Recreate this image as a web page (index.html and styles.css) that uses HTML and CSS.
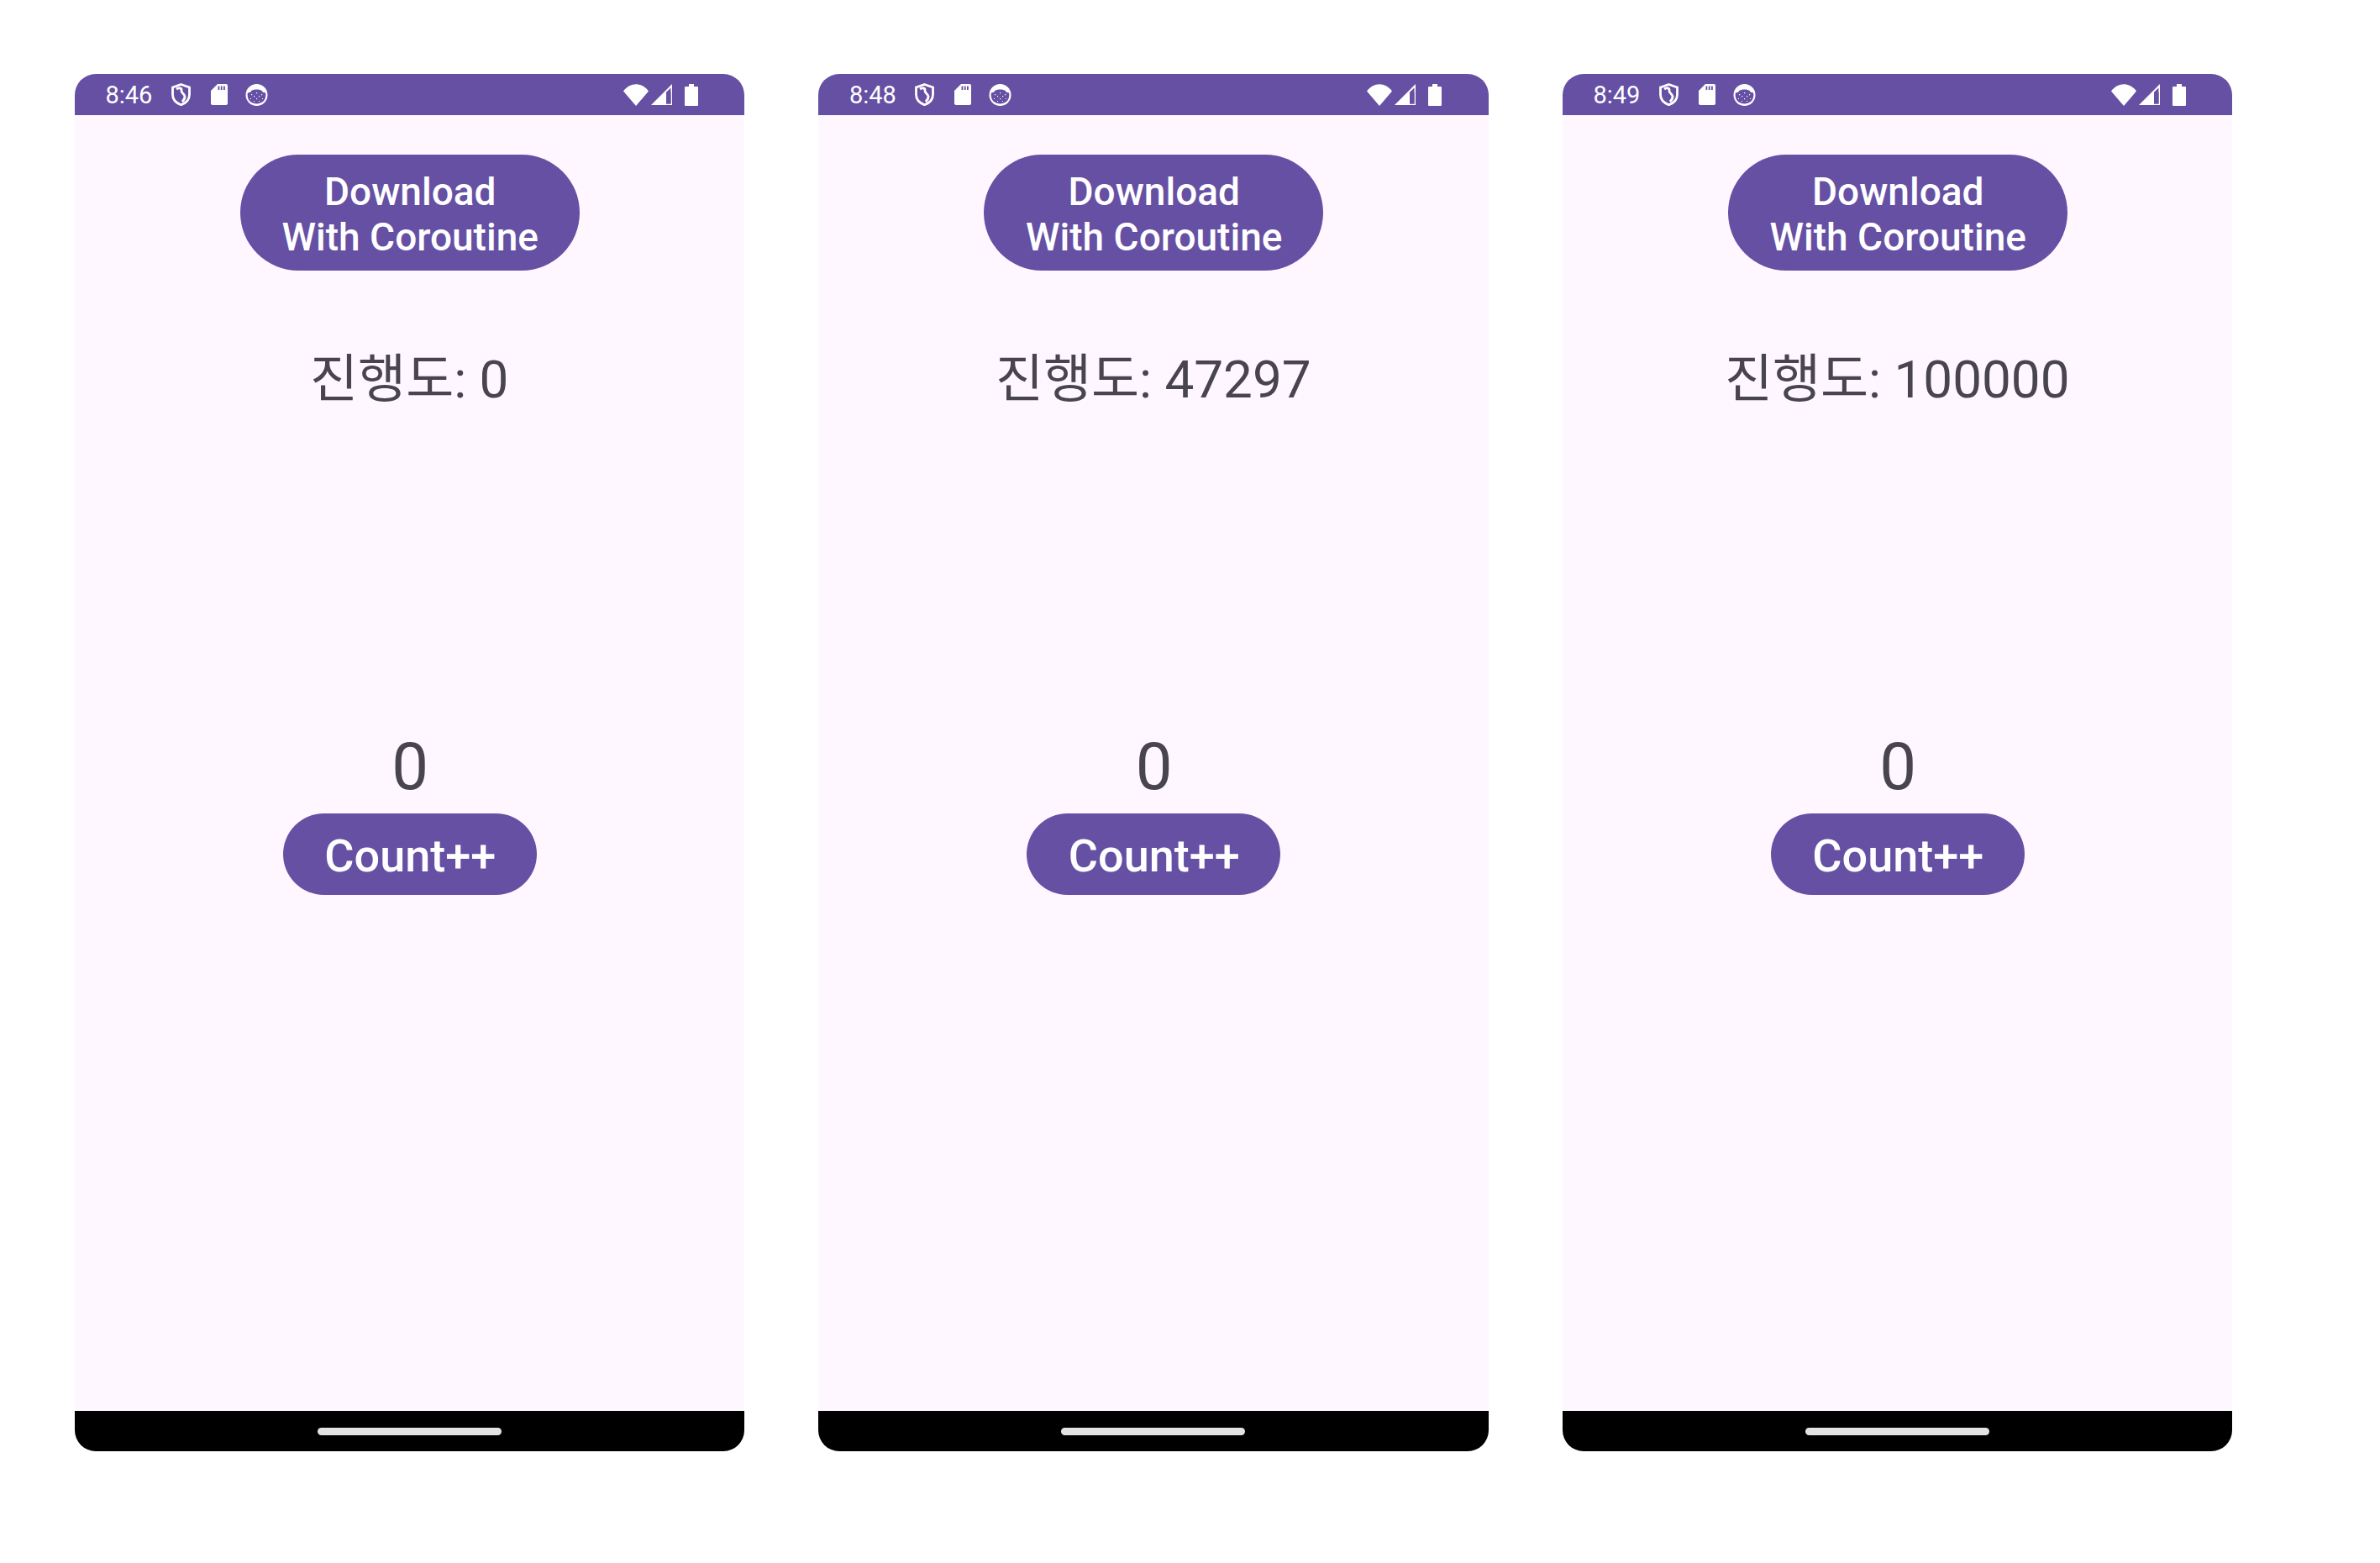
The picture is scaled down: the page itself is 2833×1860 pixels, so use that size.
FILE: index.html
```html
<!DOCTYPE html>
<html lang="ko">
<head>
  <meta charset="UTF-8" />
  <title>Coroutine Download</title>
  <link rel="stylesheet" href="styles.css">
</head>
<body>
  <!-- Status bar icons, shared by all three phones -->
  <svg class="icon-defs" width="0" height="0">
    <symbol id="ic-shield" viewBox="0 0 23 27">
      <path d="M11.5 1.500 21.500 5V13.500C21.500 19 17.500 23.500 11.500 25.800 5.500 23.500 1.500 19 1.500 13.500V5Z" fill="none" stroke="#fff" stroke-width="2.800"/>
      <path d="M6 7C9 5 12.500 5.600 12 9 11.600 11.500 15.500 12.500 16 15.500 16.200 18 15 20 12.800 22" fill="none" stroke="#fff" stroke-width="2.800"/>
    </symbol>
    <symbol id="ic-sd" viewBox="0 0 20 25">
      <path d="M8 0H18A2 2 0 0 1 20 2V23A2 2 0 0 1 18 25H2A2 2 0 0 1 0 23V8Z" fill="#fff"/>
      <path d="M8.500 2.500H10.300V7H8.500ZM11.800 2.500H13.600V7H11.800ZM15 2.500H16.800V7H15Z" fill="#6650a4"/>
    </symbol>
    <symbol id="ic-cat" viewBox="0 0 27 26">
      <circle cx="13.500" cy="13" r="13" fill="#fff"/>
      <path d="M2.800 10.500 6 9.800 7.500 7.800C11 6.200 16 6.200 19.500 7.800L21 9.800 24.200 10.500C25 16 23 23.200 13.500 23.400 4 23.200 2 16 2.800 10.500Z" fill="#6650a4"/>
      <path d="M7 12h1.200v1.200H7ZM13 10h1.200v1.200H13ZM19 12h1.200v1.200H19ZM10 14h1.200v1.200H10ZM16 14h1.200v1.200H16ZM6 17h1v1H6ZM13 17h1.200v1.200H13ZM20 17h1v1h-1ZM10 20h1v1h-1ZM16 20h1v1h-1Z" fill="#fff"/>
    </symbol>
    <symbol id="ic-wifi" viewBox="0 0 30 26">
      <path d="M0 8.500C8-2.500 22-2.500 30 8.500L15 26Z" fill="#fff"/>
    </symbol>
    <symbol id="ic-signal" viewBox="0 0 25 25">
      <path d="M25 0V25H0ZM23.500 4.500 18 9.800V23.500H23.500Z" fill="#fff" fill-rule="evenodd"/>
      <path d="M18 9.800H23.500V23.500H18Z" fill="#6650a4"/>
    </symbol>
    <symbol id="ic-battery" viewBox="0 0 16 26">
      <path d="M5 0H11V3H15A1 1 0 0 1 16 4V25A1 1 0 0 1 15 26H1A1 1 0 0 1 0 25V4A1 1 0 0 1 1 3H5Z" fill="#fff"/>
    </symbol>
  </svg>

  <div class="phones">
    <section class="phone">
      <header class="status-bar">
        <span class="clock">8:46</span>
        <svg class="ic ic-shield"><use href="#ic-shield"/></svg>
        <svg class="ic ic-sd"><use href="#ic-sd"/></svg>
        <svg class="ic ic-cat"><use href="#ic-cat"/></svg>
        <svg class="ic ic-wifi"><use href="#ic-wifi"/></svg>
        <svg class="ic ic-signal"><use href="#ic-signal"/></svg>
        <svg class="ic ic-battery"><use href="#ic-battery"/></svg>
      </header>
      <main class="screen">
        <button class="btn btn-download">Download<br>With Coroutine</button>
        <p class="progress">진행도: 0</p>
        <p class="count">0</p>
        <button class="btn btn-count">Count++</button>
      </main>
      <footer class="nav-bar"><span class="home-pill"></span></footer>
    </section>

    <section class="phone">
      <header class="status-bar">
        <span class="clock">8:48</span>
        <svg class="ic ic-shield"><use href="#ic-shield"/></svg>
        <svg class="ic ic-sd"><use href="#ic-sd"/></svg>
        <svg class="ic ic-cat"><use href="#ic-cat"/></svg>
        <svg class="ic ic-wifi"><use href="#ic-wifi"/></svg>
        <svg class="ic ic-signal"><use href="#ic-signal"/></svg>
        <svg class="ic ic-battery"><use href="#ic-battery"/></svg>
      </header>
      <main class="screen">
        <button class="btn btn-download">Download<br>With Coroutine</button>
        <p class="progress">진행도: 47297</p>
        <p class="count">0</p>
        <button class="btn btn-count">Count++</button>
      </main>
      <footer class="nav-bar"><span class="home-pill"></span></footer>
    </section>

    <section class="phone">
      <header class="status-bar">
        <span class="clock">8:49</span>
        <svg class="ic ic-shield"><use href="#ic-shield"/></svg>
        <svg class="ic ic-sd"><use href="#ic-sd"/></svg>
        <svg class="ic ic-cat"><use href="#ic-cat"/></svg>
        <svg class="ic ic-wifi"><use href="#ic-wifi"/></svg>
        <svg class="ic ic-signal"><use href="#ic-signal"/></svg>
        <svg class="ic ic-battery"><use href="#ic-battery"/></svg>
      </header>
      <main class="screen">
        <button class="btn btn-download">Download<br>With Coroutine</button>
        <p class="progress">진행도: 100000</p>
        <p class="count">0</p>
        <button class="btn btn-count">Count++</button>
      </main>
      <footer class="nav-bar"><span class="home-pill"></span></footer>
    </section>
  </div>
</body>
</html>
```

FILE: styles.css
```css
body {
  margin: 0;
  background-color: #ffffff;
  font-family: Roboto, "Noto Sans CJK KR", sans-serif;
}

.icon-defs {
  position: absolute;
}

.phones {
  display: flex;
  gap: 88px;
  padding: 88px 88px 88px 88.5px;
}

.phone {
  display: flex;
  flex-direction: column;
  width: 797.5px;
  height: 1639px;
  border-radius: 25px;
  overflow: hidden;
  background-color: #fef7ff;
}

.status-bar {
  display: flex;
  align-items: center;
  height: 49px;
  padding-left: 37px;
  background-color: #6650a4;
  color: #ffffff;
}

.clock {
  width: 78px;
  font-size: 29px;
  line-height: 49px;
  padding-top: 2px;
}

.ic {
  flex: none;
}

.ic-shield {
  width: 23px;
  height: 27px;
  margin-right: 24px;
}

.ic-sd {
  width: 20px;
  height: 25px;
  margin-right: 21px;
}

.ic-cat {
  width: 27px;
  height: 26px;
  margin-right: 423px;
}

.ic-wifi {
  width: 30px;
  height: 26px;
  margin-right: 3px;
}

.ic-signal {
  width: 25px;
  height: 25px;
  margin-right: 15px;
}

.ic-battery {
  width: 16px;
  height: 26px;
}

.screen {
  flex: 1;
  display: flex;
  flex-direction: column;
  align-items: center;
  padding-top: 47px;
}

.btn {
  border: none;
  padding: 0;
  background-color: #6650a4;
  color: #ffffff;
  font-family: inherit;
  font-weight: 500;
}

.btn-download {
  width: 404px;
  height: 138px;
  margin-left: 1px;
  padding: 3px 0 0 1px;
  border-radius: 69px;
  font-size: 46px;
  line-height: 54px;
}

.progress {
  margin: 90px 0 0;
  color: #49454f;
  font-size: 62px;
  line-height: 80px;
}

.count {
  margin: 375px 0 0 2px;
  color: #49454f;
  font-size: 78px;
  line-height: 92px;
}

.btn-count {
  width: 302px;
  height: 97px;
  margin: 9px 0 0 1px;
  padding: 4px 0 0 1px;
  border-radius: 49px;
  font-size: 54px;
  line-height: 62px;
}

.nav-bar {
  display: flex;
  align-items: center;
  justify-content: center;
  height: 48px;
  background-color: #000000;
}

.home-pill {
  width: 219px;
  height: 9px;
  border-radius: 5px;
  background-color: #e3e3e3;
}
```
